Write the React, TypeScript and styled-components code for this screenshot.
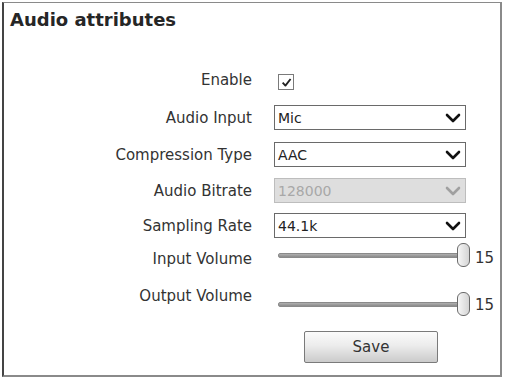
import React from "react";
import styled, { createGlobalStyle } from "styled-components";

const Global = createGlobalStyle`
  html, body { margin: 0; padding: 0; background: #fff; }
  body { font-family: "DejaVu Sans", Verdana, sans-serif; color: #333; }
`;

const Panel = styled.div`
  margin: 2px 3px 0 2px;
  height: 375px;
  box-sizing: border-box;
  border-top: 1px solid #8a8a8a;
  border-left: 2px solid #444;
  border-right: 2px solid #8a8a8a;
  border-bottom: 2px solid #8a8a8a;
  padding: 6px 0 0 6px;
  display: flex;
  flex-direction: column;
`;

const Title = styled.h1`
  margin: 0;
  font-size: 18px;
  line-height: 21px;
  font-weight: bold;
  color: #262626;
`;

const Form = styled.div`
  display: flex;
  flex-direction: column;
  margin-top: 40px;
`;

const Row = styled.div<{ $h: number; $mt?: number }>`
  display: grid;
  grid-template-columns: 242px 192px auto;
  column-gap: 22px;
  align-items: center;
  height: ${(p) => p.$h}px;
  margin-top: ${(p) => p.$mt ?? 0}px;
`;

const Label = styled.div<{ $dy?: number }>`
  text-align: right;
  font-size: 15px;
  color: #333;
  white-space: nowrap;
  position: relative;
  top: ${(p) => p.$dy ?? 0}px;
`;

const Check = styled.div`
  width: 14px;
  height: 14px;
  border: 1px solid #7a7a7a;
  margin-left: 4px;
  display: flex;
  align-items: center;
  justify-content: center;
  background: #fff;
`;

const Select = styled.div<{ $disabled?: boolean }>`
  height: 25px;
  box-sizing: border-box;
  border: 1px solid ${(p) => (p.$disabled ? "#bdbdbd" : "#6a6a6a")};
  background: ${(p) => (p.$disabled ? "#dedede" : "#fff")};
  color: ${(p) => (p.$disabled ? "#a8a8a8" : "#222")};
  display: flex;
  align-items: center;
  justify-content: space-between;
  padding: 1px 4px 0 3px;
  font-size: 14px;
`;

const Slider = styled.div`
  position: relative;
  height: 24px;
  margin-right: -4px;
  display: flex;
  align-items: center;
`;

const Track = styled.div`
  height: 3px;
  flex: 1;
  margin-left: 4px;
  margin-right: 6px;
  border-radius: 2px;
  background: linear-gradient(#b0b0b0, #8a8a8a);
  border: 1px solid #8a8a8a;
`;

const Thumb = styled.div`
  position: absolute;
  right: 0;
  top: 0;
  width: 11px;
  height: 22px;
  border-radius: 6px;
  border: 1px solid #6a6a6a;
  background: linear-gradient(90deg, #f6f6f6, #d4d4d4);
`;

const Value = styled.div<{ $dy?: number }>`
  font-size: 15px;
  color: #333;
  margin-left: -13px;
  position: relative;
  top: ${(p) => p.$dy ?? 0}px;
`;

const ButtonCell = styled.div`
  grid-column: 2;
  display: flex;
  padding-left: 30px;
`;

const SaveButton = styled.button`
  width: 134px;
  height: 32px;
  border: 1px solid #7a7a7a;
  border-radius: 2px;
  background: linear-gradient(#fbfbfb 0%, #ececec 45%, #cbcbcb 100%);
  font-family: "DejaVu Sans", Verdana, sans-serif;
  font-size: 15px;
  color: #333;
  padding: 0;
`;

const Chevron = ({ color }: { color: string }) => (
  <svg width="16" height="10" viewBox="0 0 16 10">
    <path d="M2 2 L8 8 L14 2" fill="none" stroke={color} strokeWidth="2.6" strokeLinecap="round" strokeLinejoin="round" />
  </svg>
);

const Tick = () => (
  <svg width="11" height="11" viewBox="0 0 10 10">
    <path d="M1.5 5.2 L4 7.8 L8.7 1.8" fill="none" stroke="#222" strokeWidth="1.7" strokeLinejoin="round" />
  </svg>
);

const SelectBox = ({ value, disabled }: { value: string; disabled?: boolean }) => (
  <Select $disabled={disabled}>
    <span>{value}</span>
    <Chevron color={disabled ? "#a0a0a0" : "#111"} />
  </Select>
);

const VolumeSlider = () => (
  <Slider>
    <Track />
    <Thumb />
  </Slider>
);

export default function App() {
  return (
    <>
      <Global />
      <Panel>
        <Title>Audio attributes</Title>
        <Form>
          <Row $h={24}>
            <Label $dy={-2}>Enable</Label>
            <div>
              <Check>
                <Tick />
              </Check>
            </div>
          </Row>
          <Row $h={25} $mt={11}>
            <Label>Audio Input</Label>
            <SelectBox value="Mic" />
          </Row>
          <Row $h={25} $mt={12}>
            <Label>Compression Type</Label>
            <SelectBox value="AAC" />
          </Row>
          <Row $h={25} $mt={11}>
            <Label>Audio Bitrate</Label>
            <SelectBox value="128000" disabled />
          </Row>
          <Row $h={25} $mt={10}>
            <Label>Sampling Rate</Label>
            <SelectBox value="44.1k" />
          </Row>
          <Row $h={24} $mt={5}>
            <Label $dy={4}>Input Volume</Label>
            <VolumeSlider />
            <Value $dy={3}>15</Value>
          </Row>
          <Row $h={24} $mt={25}>
            <Label $dy={-8}>Output Volume</Label>
            <VolumeSlider />
            <Value $dy={1}>15</Value>
          </Row>
          <Row $h={32} $mt={15}>
            <ButtonCell>
              <SaveButton>Save</SaveButton>
            </ButtonCell>
          </Row>
        </Form>
      </Panel>
    </>
  );
}
